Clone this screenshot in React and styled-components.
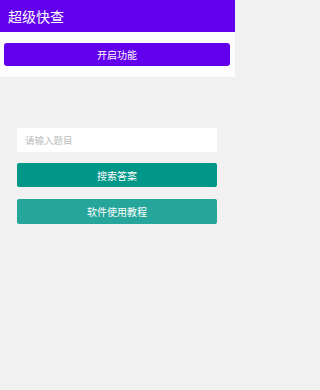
import React from "react";
import styled, { createGlobalStyle } from "styled-components";

const Global = createGlobalStyle`
  html, body { margin: 0; padding: 0; }
  body {
    background: #f1f1f1;
    font-family: Roboto, "Noto Sans CJK SC", sans-serif;
  }
`;

const Page = styled.div`
  width: 235px;
  min-height: 390px;
  background: #f1f1f1;
  display: flex;
  flex-direction: column;
`;

const TopBar = styled.header`
  height: 32px;
  background: #6200ee;
  display: flex;
  align-items: center;
  padding-left: 8px;
  color: #ffffff;
  font-size: 14px;
  box-sizing: border-box;
`;

const EnableSection = styled.div`
  background: #fdfdfd;
  padding: 11px 5px 11px 4px;
  height: 45px;
  box-sizing: border-box;
`;

const Button = styled.button`
  display: flex;
  align-items: center;
  justify-content: center;
  width: 100%;
  height: ${(p) => p.$h || 24}px;
  border: none;
  border-radius: ${(p) => p.$r || 2}px;
  background: ${(p) => p.$bg};
  color: #ffffff;
  font-family: Roboto, "Noto Sans CJK SC", sans-serif;
  font-size: 10px;
  padding: 0;
  margin: 0;
`;

const Form = styled.div`
  display: flex;
  flex-direction: column;
  padding: 51px 18px 0 17px;
`;

const Input = styled.input`
  height: 24px;
  box-sizing: border-box;
  border: none;
  background: #ffffff;
  padding: 0 8px;
  font-family: Roboto, "Noto Sans CJK SC", sans-serif;
  font-size: 9.5px;
  color: #333;
  outline: none;
  margin-bottom: 11px;
  &::placeholder { color: #bdbdbd; }
`;

const Gap = styled.div`
  height: ${(p) => p.$h}px;
`;

export default function App() {
  return (
    <Page>
      <Global />
      <TopBar>超级快查</TopBar>
      <EnableSection>
        <Button $bg="#6200ee" $h={23} $r={3}>开启功能</Button>
      </EnableSection>
      <Form>
        <Input placeholder="请输入题目" />
        <Button $bg="#009688">搜索答案</Button>
        <Gap $h={12} />
        <Button $bg="#26a69a" $h={25}>软件使用教程</Button>
      </Form>
    </Page>
  );
}
